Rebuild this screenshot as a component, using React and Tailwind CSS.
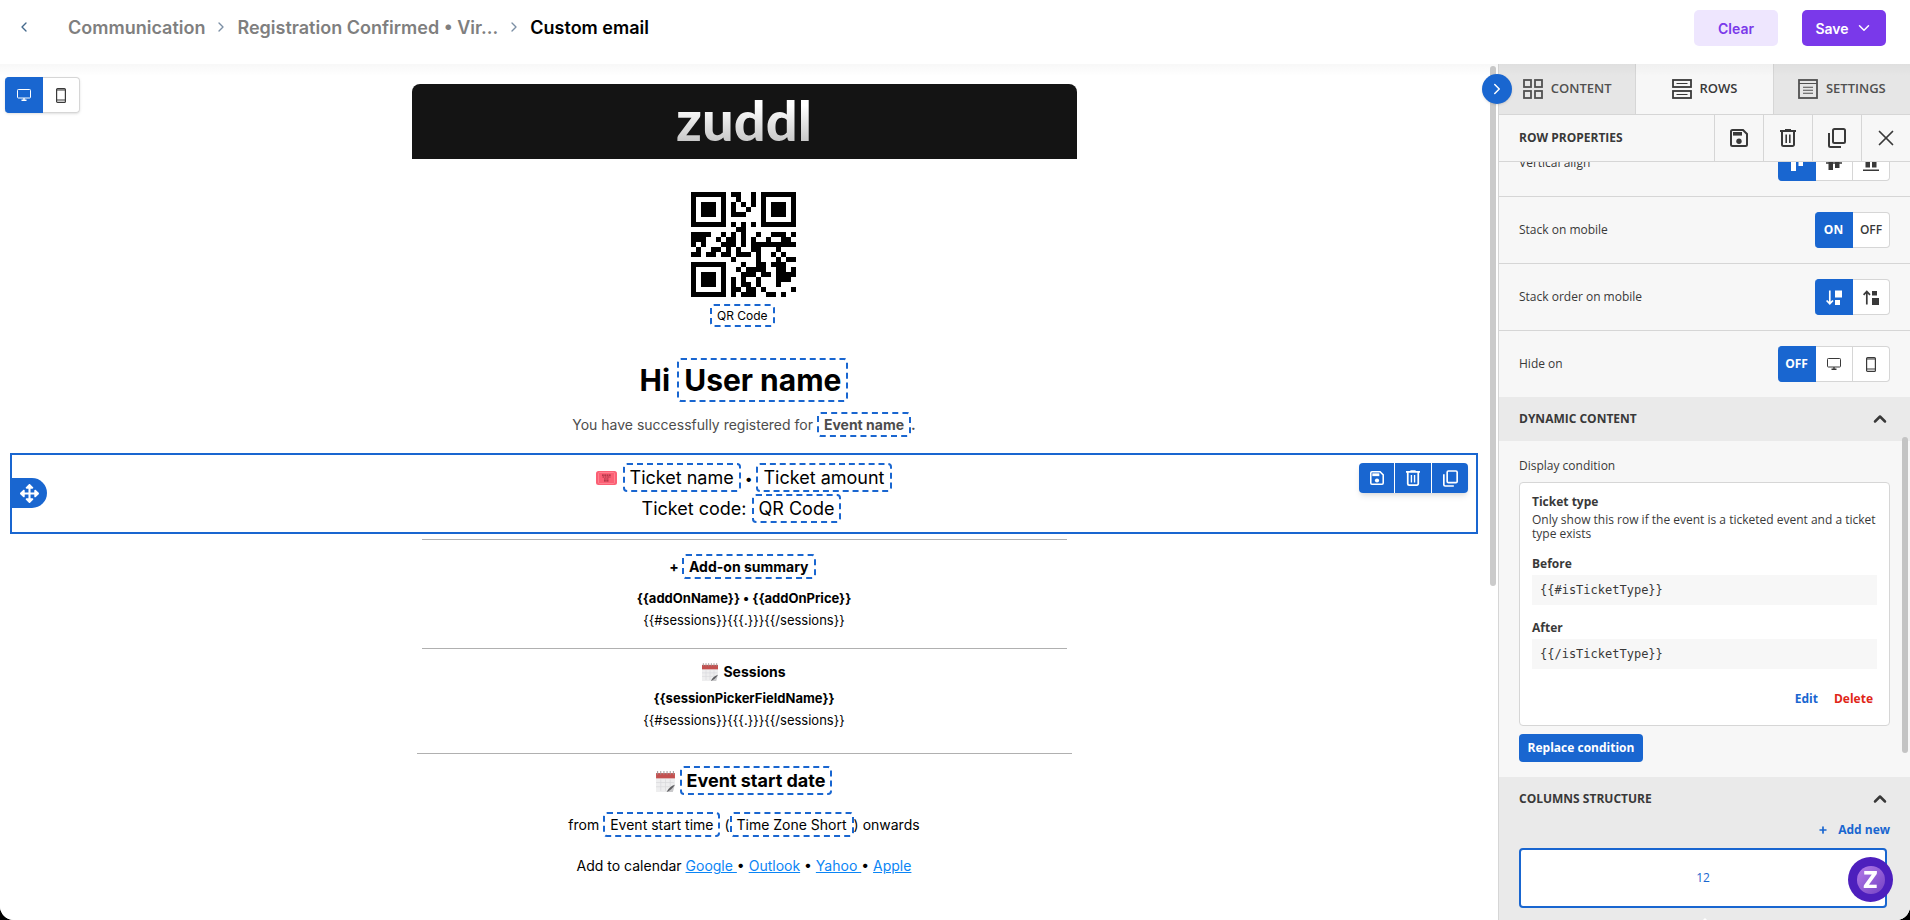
import React from 'react';
import { ChevronDown, ChevronLeft, ChevronRight, ChevronUp, Plus, X } from 'lucide-react';
import { FaArrowsAlt } from 'react-icons/fa';

const QR_ROWS = [
  '#######.##..#.#######',
  '#.....#..#..#.#.....#',
  '#.###.#.#.#.#.#.###.#',
  '#.###.#.#..#..#.###.#',
  '#.###.#.###...#.###.#',
  '#.....#.......#.....#',
  '#######.#.#.#.#######',
  '.........##..........',
  '####..#.#.#..#..###.#',
  '###..#.##.#.#..#..##.',
  '#.#...###.#.#########',
  '.#..##.#.#..##...#...',
  '##.##.##.###.#..#.#..',
  '........#....#...#.##',
  '#######...#..##.###..',
  '#.....#..#.####..##.#',
  '#.###.#...###.##.####',
  '#.###.#.#.#..#...###.',
  '#.###.#.#.##.#...#...',
  '#.....#.##.##.#.....#',
  '#######.#.###..##.#..',
];

const QrCode = () => (
  <svg viewBox="0 0 21 21" shapeRendering="crispEdges" className="w-[105px] h-[105px]" role="img" aria-label="QR code">
    {QR_ROWS.map((row, y) =>
      row.split('').map((cell, x) =>
        cell === '#' ? <rect key={`${x}-${y}`} x={x} y={y} width="1" height="1" /> : null
      )
    )}
  </svg>
);

const SaveIcon = ({ className }) => (
  <svg viewBox="0 0 18 18" fill="none" stroke="currentColor" strokeWidth="2" className={className}>
    <path d="M1 2.5V15.5A1.5 1.5 0 0 0 2.5 17H15.5A1.5 1.5 0 0 0 17 15.5V5L13 1H2.5A1.5 1.5 0 0 0 1 2.5Z" />
    <rect x="3" y="3" width="9" height="3.6" fill="currentColor" stroke="none" />
    <circle cx="9" cy="12.2" r="2.7" fill="currentColor" stroke="none" />
  </svg>
);

const TrashIcon = ({ className }) => (
  <svg viewBox="0 0 16 18" fill="none" stroke="currentColor" strokeWidth="2" className={className}>
    <path d="M0 2H16M5 1H11M2 2V15.5A1.5 1.5 0 0 0 3.5 17H12.5A1.5 1.5 0 0 0 14 15.5V2" />
    <path d="M6.2 5.5V14M9.8 5.5V14" strokeWidth="1.6" />
  </svg>
);

const CopyIcon = ({ className }) => (
  <svg viewBox="0 0 18 20" fill="none" stroke="currentColor" strokeWidth="2" className={className}>
    <rect x="5" y="1" width="12" height="14" rx="1.5" />
    <path d="M1 5V17.5A1.5 1.5 0 0 0 2.5 19H13" />
  </svg>
);

const DesktopIcon = ({ className }) => (
  <svg viewBox="0 0 14 12" fill="none" stroke="currentColor" className={className}>
    <rect x="0.5" y="0.5" width="13" height="8.5" rx="0.8" strokeWidth="1" />
    <path d="M7 9V11M4.5 11.3H9.5" strokeWidth="1.4" />
  </svg>
);

const PhoneIcon = ({ className }) => (
  <svg viewBox="0 0 10 15" fill="none" stroke="currentColor" className={className}>
    <rect x="0.6" y="0.6" width="8.8" height="13.8" rx="1" strokeWidth="1.2" />
    <path d="M1 2H9M1 12H9" strokeWidth="1.2" />
  </svg>
);

const GridIcon = () => (
  <svg viewBox="0 0 20 20" fill="none" stroke="currentColor" strokeWidth="1.8" className="w-5 h-5">
    <rect x="1" y="1" width="7" height="7" />
    <rect x="12" y="1" width="7" height="7" />
    <rect x="1" y="12" width="7" height="7" />
    <rect x="12" y="12" width="7" height="7" />
  </svg>
);

const RowsIcon = () => (
  <svg viewBox="0 0 20 20" fill="none" stroke="currentColor" strokeWidth="1.8" className="w-5 h-5">
    <rect x="1" y="1" width="18" height="7" />
    <rect x="1" y="12" width="18" height="7" />
    <path d="M4.5 4.5H15.5M4.5 15.5H15.5" strokeWidth="1.2" />
  </svg>
);

const SettingsIcon = () => (
  <svg viewBox="0 0 20 20" fill="none" stroke="currentColor" strokeWidth="1.8" className="w-5 h-5">
    <rect x="1" y="1" width="18" height="18" />
    <path d="M1 4.5H19M5 8.3H15M5 11.3H15M5 14.3H15" strokeWidth="1.1" />
  </svg>
);

const AlignTopIcon = () => (
  <svg viewBox="0 0 16 16" fill="currentColor" className="w-4 h-4">
    <path d="M0 0H16V1.5H0ZM2 3H7V16H2ZM9.5 3H14V11H9.5Z" />
  </svg>
);

const AlignMiddleIcon = () => (
  <svg viewBox="0 0 16 16" fill="currentColor" className="w-4 h-4">
    <path d="M0 7.2H16V8.8H0ZM2.5 1H7V15H2.5ZM9 3H13.5V13H9Z" />
  </svg>
);

const AlignBottomIcon = () => (
  <svg viewBox="0 0 16 16" fill="currentColor" className="w-4 h-4">
    <path d="M0 14.5H16V16H0ZM2.5 1H7V12.5H2.5ZM9 5H13.5V12.5H9Z" />
  </svg>
);

const StackDownIcon = () => (
  <svg viewBox="0 0 16 15" fill="none" stroke="currentColor" strokeWidth="1.7" className="w-4 h-[15px]">
    <path d="M3.8 0.5V13.5M0.6 10.5L3.8 13.7L7 10.5" />
    <path d="M9 0.5H16V7.5H9ZM9 10H14V15H9Z" fill="currentColor" stroke="none" />
  </svg>
);

const StackUpIcon = () => (
  <svg viewBox="0 0 16 15" fill="none" stroke="currentColor" strokeWidth="1.7" className="w-4 h-[15px]">
    <path d="M3.8 14.5V1.5M0.6 4.8L3.8 1.5L7 4.8" />
    <path d="M9 1H14V5.5H9ZM9 8H16V15H9Z" fill="currentColor" stroke="none" />
  </svg>
);

const TicketIcon = () => (
  <svg viewBox="0 0 21 14" className="inline-block w-[21px] h-[14px] align-[-1px]">
    <rect width="21" height="14" rx="2.5" fill="#fb5f74" />
    <rect x="2.5" y="1.5" width="16" height="11" rx="1" fill="none" stroke="#ff8a97" strokeWidth="0.8" />
    <path d="M6 4.2H15M6.5 6H14.5M8 8H13M8 9.8H13" stroke="#a02c3c" strokeWidth="1.2" strokeDasharray="1.8 0.5" />
  </svg>
);

const CalendarIcon = ({ className }) => (
  <svg viewBox="0 0 18 20" className={className}>
    <path d="M0 2H18V13L11.5 20H0Z" fill="#eeeeef" />
    <path d="M0 2H18V7H0Z" fill="#c4504f" />
    <path d="M1.5 0V3.5M4.5 0V3.5M7.5 0V3.5M10.5 0V3.5M13.5 0V3.5M16.5 0V3.5" stroke="#9a8f8f" strokeWidth="0.9" />
    <path d="M4.5 8V19M9 8V19M13.5 8V15M0 11H17M0 15H15" stroke="#d9d9dc" strokeWidth="0.7" />
    <path d="M18 13L16 20H10Z" fill="#c9c9cb" />
    <path d="M18 13Q12.5 14.5 10 20Q14.5 18.5 18 13Z" fill="#5d5d60" />
  </svg>
);

const Tag = ({ children }) => (
  <span className="border-2 border-dashed border-[#1966d0] rounded-sm px-[5px] py-[2px] whitespace-nowrap">
    {children}
  </span>
);

const Divider = ({ className }) => <hr className={`border-0 h-px bg-[#b0b0b0] ${className}`} />;

const Segmented = ({ label, options, active }) => (
  <div role="group" aria-label={label} className="flex text-[12px]">
    {options.map((option, i) => (
      <button
        key={i}
        type="button"
        aria-label={option.name}
        aria-pressed={i === active}
        className={`h-9 flex items-center justify-center border-y border-r first:rounded-l last:rounded-r ${
          i === active
            ? 'w-[38px] bg-[#1966d0] border-[#1966d0] text-white font-bold'
            : 'w-[37px] bg-white border-[#d6d6d6] text-[#393939] font-semibold'
        }`}
      >
        {option.content}
      </button>
    ))}
  </div>
);

const PropertyRow = ({ label, options, active, last }) => (
  <div className={`px-5 flex items-center justify-between ${last ? 'h-[66px]' : 'h-[67px] border-b border-[#d6d6d6]'}`}>
    <span>{label}</span>
    <Segmented label={label} options={options} active={active} />
  </div>
);

const Header = () => (
  <header className="h-16 shrink-0 bg-white flex items-start justify-between pt-[10px] pl-4 pr-6">
    <nav aria-label="Breadcrumb" className="flex items-center h-[34px] text-[18px] font-semibold text-[#7f7f7f]">
      <button type="button" aria-label="Back" className="w-4 mr-9 flex justify-center text-[#44698c]">
        <ChevronLeft className="w-[18px] h-[18px]" />
      </button>
      <a href="#communication">Communication</a>
      <ChevronRight className="w-4 h-4 mx-2 text-[#7b8fa5]" />
      <a href="#registration">Registration Confirmed • Vir...</a>
      <ChevronRight className="w-4 h-4 mx-2 text-[#7b8fa5]" />
      <span className="text-black">Custom email</span>
    </nav>
    <div className="flex gap-6 text-[14px] font-semibold">
      <button type="button" className="w-[84px] h-9 rounded-[5px] bg-[#eee6fe] text-[#7a39ea]">
        Clear
      </button>
      <button type="button" className="w-[84px] h-9 rounded-[5px] bg-[#7a39ea] text-white flex items-center justify-center gap-[6px]">
        Save
        <ChevronDown className="w-[18px] h-[18px]" />
      </button>
    </div>
  </header>
);

const RowToolbar = () => (
  <div className="absolute top-2 right-2 flex gap-px rounded-sm overflow-hidden shadow-md text-white bg-white">
    <button type="button" aria-label="Save row" className="w-[35px] h-[30px] bg-[#1966d0] flex items-center justify-center">
      <SaveIcon className="w-[14px] h-[14px]" />
    </button>
    <button type="button" aria-label="Delete row" className="w-9 h-[30px] bg-[#1966d0] flex items-center justify-center">
      <TrashIcon className="w-[14px] h-4" />
    </button>
    <button type="button" aria-label="Duplicate row" className="w-9 h-[30px] bg-[#1966d0] flex items-center justify-center">
      <CopyIcon className="w-[15px] h-[17px]" />
    </button>
  </div>
);

const EmailCanvas = () => (
  <main className="relative flex-1 min-w-0 bg-white overflow-hidden">
    <div className="absolute left-[5px] top-[13px] rounded shadow-sm">
      <Segmented
        label="Preview device"
        active={0}
        options={[
          { name: 'Desktop', content: <DesktopIcon className="w-[14px] h-3" /> },
          { name: 'Mobile', content: <PhoneIcon className="w-[10px] h-[15px]" /> },
        ]}
      />
    </div>
    <div className="absolute right-[2px] top-[2px] w-[6px] h-[520px] rounded-full bg-[#cbcbcb]" />

    <div className="mr-[10px] pt-5 flex flex-col items-center text-center text-black text-[14px]">
      <div className="w-[665px] h-[75px] rounded-t-lg bg-[#141414] flex items-start justify-center">
        <span
          className="font-black text-[56px] leading-[72px] bg-linear-to-b from-[#ffffff] from-30% to-[#c8c8c8] to-80% bg-clip-text text-transparent"
          style={{ fontFamily: 'Lato, sans-serif' }}
        >
          zuddl
        </span>
      </div>
      <div className="mt-[33px] pr-[2px]">
        <QrCode />
      </div>
      <p className="mt-[7px] text-[12px] leading-6">
        <Tag>QR Code</Tag>&nbsp;
      </p>
      <h1 className="mt-[29px] text-[30px] leading-[46px] font-bold">
        Hi <Tag>User name</Tag>
      </h1>
      <p className="mt-[9px] leading-[26px] text-[#4d4d4d]">
        You have successfully registered for <b><Tag>Event name</Tag>.</b>
      </p>

      <section className="relative self-stretch mt-[15px] mx-[10px] border-2 border-[#1966d0] pt-2 pb-2 text-[18px] leading-[30px]">
        <p>
          <TicketIcon /> <Tag>Ticket name</Tag>
          <span className="text-[14px]"> • </span>
          <Tag>Ticket amount</Tag>
        </p>
        <p>
          Ticket code: <Tag>QR Code</Tag>&nbsp;
        </p>
        <button
          type="button"
          aria-label="Move row"
          className="absolute left-0 top-[23px] w-[35px] h-[30px] rounded-r-full bg-[#1966d0] text-white flex items-center justify-center"
        >
          <FaArrowsAlt className="w-[19px] h-[19px]" />
        </button>
        <RowToolbar />
      </section>

      <Divider className="mt-[5px] w-[645px]" />
      <p className="mt-[15px] leading-6 font-bold">
        + <Tag>Add-on summary</Tag>&nbsp;
      </p>
      <p className="mt-2 text-[13px] leading-[22px] font-bold">{'{{addOnName}} • {{addOnPrice}}'}</p>
      <p className="text-[13px] leading-[22px]">{'{{#sessions}}{{{.}}}{{/sessions}}'}</p>

      <Divider className="mt-[17px] w-[645px]" />
      <p className="mt-[11px] leading-6 font-bold flex items-center gap-[5px]">
        <CalendarIcon className="w-4 h-[18px]" /> Sessions
      </p>
      <p className="mt-[3px] text-[13px] leading-[22px] font-bold">{'{{sessionPickerFieldName}}'}</p>
      <p className="text-[13px] leading-[22px]">{'{{#sessions}}{{{.}}}{{/sessions}}'}</p>

      <Divider className="mt-[22px] w-[655px]" />
      <p className="mt-3 text-[18px] leading-[30px] font-bold flex items-center gap-[5px]">
        <CalendarIcon className="w-[19px] h-[21px]" />
        <span>
          <Tag>Event start date</Tag>
        </span>
      </p>
      <p className="mt-4 leading-[26px]">
        from <Tag>Event start time</Tag> (<Tag>Time Zone Short</Tag>) onwards
      </p>
      <p className="mt-4 leading-6 whitespace-pre">
        {'Add to calendar '}
        <a href="#google" className="text-[#0a85f5] underline">{'Google '}</a>
        {'• '}
        <a href="#outlook" className="text-[#0a85f5] underline">Outlook</a>
        {' • '}
        <a href="#yahoo" className="text-[#0a85f5] underline">{'Yahoo '}</a>
        {'• '}
        <a href="#apple" className="text-[#0a85f5] underline">Apple</a>
      </p>
    </div>
  </main>
);

const tabs = [
  { name: 'CONTENT', icon: <GridIcon /> },
  { name: 'ROWS', icon: <RowsIcon />, active: true },
  { name: 'SETTINGS', icon: <SettingsIcon /> },
];

const actions = [
  { name: 'Save row', icon: <SaveIcon className="w-[18px] h-[18px]" /> },
  { name: 'Delete row', icon: <TrashIcon className="w-4 h-[18px]" /> },
  { name: 'Duplicate row', icon: <CopyIcon className="w-[18px] h-5" /> },
  { name: 'Close', icon: <X className="w-[26px] h-[26px]" strokeWidth={1.6} /> },
];

const Sidebar = () => (
  <aside
    className="relative w-[412px] shrink-0 border-l border-[#d6d6d6] bg-[#f7f7f7] text-[#393939] text-[12px] font-medium flex flex-col"
    style={{ fontFamily: '"Open Sans", sans-serif' }}
  >
    <button
      type="button"
      aria-label="Collapse panel"
      className="absolute -left-[17px] top-[10px] z-10 w-[30px] h-[30px] rounded-full bg-[#1966d0] text-white shadow flex items-center justify-center"
    >
      <ChevronRight className="w-[18px] h-[18px]" />
    </button>

    <div role="tablist" className="flex h-[51px] shrink-0 text-[13px] font-semibold">
      {tabs.map((tab) => (
        <button
          key={tab.name}
          type="button"
          role="tab"
          aria-selected={!!tab.active}
          className={`flex-1 flex items-center justify-center gap-2 border-b border-[#d6d6d6] not-last:border-r ${
            tab.active ? 'bg-[#f7f7f7] text-[#393939]' : 'bg-[#e6e6e6] text-[#505050]'
          }`}
        >
          {tab.icon}
          {tab.name}
        </button>
      ))}
    </div>

    <div className="flex h-[47px] shrink-0 border-b border-[#d6d6d6]">
      <h2 className="flex-1 pl-5 flex items-center font-bold">ROW PROPERTIES</h2>
      {actions.map((action) => (
        <button
          key={action.name}
          type="button"
          aria-label={action.name}
          className="w-[49px] border-l border-[#d6d6d6] flex items-center justify-center"
        >
          {action.icon}
        </button>
      ))}
    </div>

    <div className="flex-1 min-h-0 overflow-hidden">
      <div className="-mt-8">
        <PropertyRow
          label="Vertical align"
          active={0}
          options={[
            { name: 'Top', content: <AlignTopIcon /> },
            { name: 'Middle', content: <AlignMiddleIcon /> },
            { name: 'Bottom', content: <AlignBottomIcon /> },
          ]}
        />
        <PropertyRow label="Stack on mobile" active={0} options={[{ content: 'ON' }, { content: 'OFF' }]} />
        <PropertyRow
          label="Stack order on mobile"
          active={0}
          options={[
            { name: 'Left on top', content: <StackDownIcon /> },
            { name: 'Right on top', content: <StackUpIcon /> },
          ]}
        />
        <PropertyRow
          label="Hide on"
          active={0}
          last
          options={[
            { content: 'OFF' },
            { name: 'Desktop', content: <DesktopIcon className="w-[14px] h-3" /> },
            { name: 'Mobile', content: <PhoneIcon className="w-[10px] h-[15px]" /> },
          ]}
        />

        <div className="h-11 px-5 bg-[#eaeaea] flex items-center justify-between">
          <h3 className="font-bold">DYNAMIC CONTENT</h3>
          <ChevronUp className="w-5 h-5" strokeWidth={3} />
        </div>

        <div className="px-5 pt-4 pb-[15px]">
          <p className="leading-[18px] mb-[7px]">Display condition</p>
          <div className="h-[244px] rounded border border-[#d6d6d6] bg-white px-3 pt-[11px]">
            <p className="font-bold leading-4">Ticket type</p>
            <p className="mt-[3px] leading-[14px]">
              Only show this row if the event is a ticketed event and a ticket type exists
            </p>
            <p className="mt-[15px] font-bold leading-4">Before</p>
            <code className="block mt-[3px] h-[30px] px-2 bg-[#f7f7f7] leading-[30px] font-['DejaVu_Sans_Mono',monospace]">
              {'{{#isTicketType}}'}
            </code>
            <p className="mt-[15px] font-bold leading-4">After</p>
            <code className="block mt-[3px] h-[30px] px-2 bg-[#f7f7f7] leading-[30px] font-['DejaVu_Sans_Mono',monospace]">
              {'{{/isTicketType}}'}
            </code>
            <div className="mt-[22px] pr-1 flex justify-end gap-4 font-bold leading-4">
              <button type="button" className="text-[#1966d0]">Edit</button>
              <button type="button" className="text-[#e02618]">Delete</button>
            </div>
          </div>
          <button type="button" className="mt-2 h-7 w-[124px] rounded bg-[#1966d0] text-white font-bold">
            Replace condition
          </button>
        </div>

        <div className="bg-[#eaeaea] px-5">
          <div className="h-11 flex items-center justify-between">
            <h3 className="font-bold">COLUMNS STRUCTURE</h3>
            <ChevronUp className="w-5 h-5" strokeWidth={3} />
          </div>
          <div className="flex justify-end">
            <button type="button" className="flex items-center gap-[10px] h-[18px] text-[#1966d0] font-bold">
              <Plus className="w-[10px] h-[10px]" strokeWidth={4} />
              Add new
            </button>
          </div>
          <button
            type="button"
            className="block w-[368px] h-[60px] mt-[9px] mb-[10px] rounded border-2 border-[#1966d0] bg-white text-[#1966d0]"
          >
            12
          </button>
          <div className="mx-auto w-0 h-0 border-x-[10px] border-x-transparent border-b-[10px] border-b-white" />
          <div className="h-10 bg-white" />
        </div>
      </div>
    </div>

    <div className="absolute right-[2px] top-[373px] w-[6px] h-[316px] rounded-full bg-[#c4c4c4]" />
  </aside>
);

const ChatButton = () => (
  <button
    type="button"
    aria-label="Open help"
    className="fixed right-[17px] bottom-[18px] z-20 w-[45px] h-[45px] rounded-full bg-[#4d1fbd] flex items-center justify-center"
  >
    <span
      className="w-7 h-7 rounded-full bg-linear-to-br from-[#b57be8] to-[#7440c4] text-white font-black text-[32px] leading-[20px]"
      style={{ fontFamily: 'Lato, sans-serif' }}
    >
      z
    </span>
  </button>
);

const App = () => {
  return (
    <div className="bg-black h-screen" style={{ fontFamily: 'Inter, sans-serif' }}>
      <div className="h-full flex flex-col overflow-hidden rounded-b-[14px] bg-white">
        <Header />
        <div className="relative flex flex-1 min-h-0">
          <EmailCanvas />
          <Sidebar />
          <div className="absolute inset-x-0 top-0 h-3 bg-linear-to-b from-black/3 to-transparent pointer-events-none" />
        </div>
      </div>
      <ChatButton />
    </div>
  );
};

export default App;
